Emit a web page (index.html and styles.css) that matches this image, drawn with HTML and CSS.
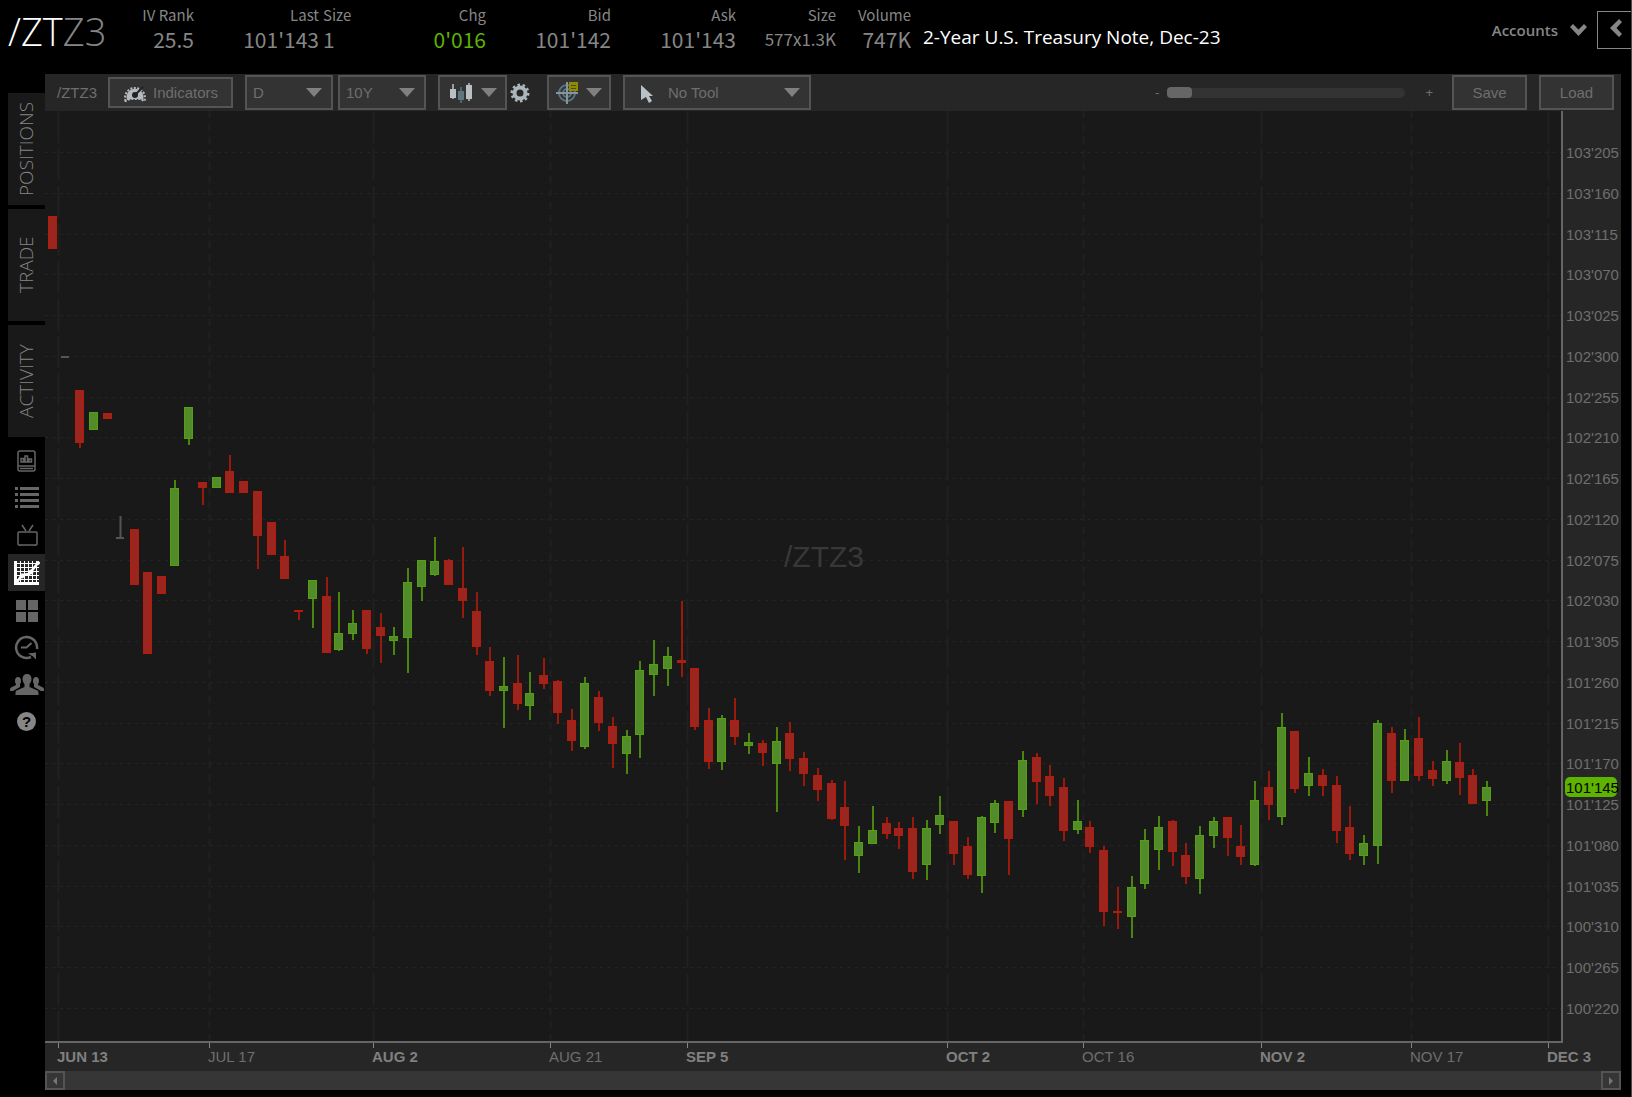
FILE: index.html
```html
<!DOCTYPE html>
<html lang="en">
<head>
    <meta charset="UTF-8">
    <meta name="viewport" content="width=device-width, initial-scale=1.0">
    <title>/ZTZ3</title>
    <link rel="stylesheet" href="styles.css">
</head>
<body>
    <header class="quote-bar">
        <h1 class="symbol">/ZT<span>Z3</span></h1>
        <div class="quote iv"><span class="label">IV Rank</span><span class="value">25.5</span></div>
        <div class="quote last"><span class="label">Last</span><span class="value">101'143</span></div>
        <div class="quote last-size"><span class="label">Size</span><span class="value">1</span></div>
        <div class="quote chg"><span class="label">Chg</span><span class="value up">0'016</span></div>
        <div class="quote bid"><span class="label">Bid</span><span class="value">101'142</span></div>
        <div class="quote ask"><span class="label">Ask</span><span class="value">101'143</span></div>
        <div class="quote size"><span class="label">Size</span><span class="value small">577x1.3K</span></div>
        <div class="quote volume"><span class="label">Volume</span><span class="value">747K</span></div>
        <p class="description">2-Year U.S. Treasury Note, Dec-23</p>
        <button class="accounts">Accounts
            <svg width="17" height="12" viewBox="0 0 17 12"><path d="M0 3 L3 0 L8.500 5.500 L14 0 L17 3 L8.500 12 Z"/></svg>
        </button>
        <button class="collapse" aria-label="Collapse">
            <svg width="12" height="18" viewBox="0 0 12 18"><path d="M9 0 L12 3 L6.500 9 L12 15 L9 18 L0 9 Z"/></svg>
        </button>
    </header>

    <main>
        <nav class="sidebar">
            <a class="tab" href="#positions">POSITIONS</a>
            <a class="tab" href="#trade">TRADE</a>
            <a class="tab" href="#activity">ACTIVITY</a>
            <div class="tools">
                <a href="#report" aria-label="Report">
                    <svg width="20" height="22" viewBox="0 0 20 22" fill="none" stroke="#666" stroke-width="1.500">
                        <rect x="1" y="1" width="17" height="20" rx="2"/>
                        <path d="M1 16H18M3 18.500H16M4 12V8.500H6.500V12ZM8 12V6H10.500V12ZM12 12V9H14.500V12Z"/>
                    </svg>
                </a>
                <a href="#watchlist" aria-label="Watchlist">
                    <svg width="24" height="22" viewBox="0 0 24 22" fill="#666">
                        <path d="M0 0h3v3h-3zM5 0h19v3H5zM0 6h3v3h-3zM5 6h19v3H5zM0 12h3v3h-3zM5 12h19v3H5zM0 18h3v3h-3zM5 18h19v3H5z"/>
                    </svg>
                </a>
                <a class="tv" href="#tv" aria-label="Video">
                    <svg width="22" height="22" viewBox="0 0 22 22" fill="none" stroke="#666" stroke-width="1.500">
                        <rect x="2" y="8" width="19" height="13" rx="1"/>
                        <path d="M10 7L6 1M13 7L17 1M4 21v1M19 21v1"/>
                    </svg>
                </a>
                <a class="active" href="#chart" aria-label="Chart">
                    <svg width="26" height="24" viewBox="0 0 26 24" fill="none" stroke="#fff">
                        <path d="M1.500 0V22.500H25" stroke-width="3"/>
                        <path d="M6.500 0V22M10.500 0V22M14.500 0V22M18.500 0V22M22.500 0V22M0 2.500H25M0 6.500H25M0 10.500H25M0 14.500H25M0 18.500H25"/>
                        <path d="M3 21L8 14L15 13L24 2" stroke-width="2.500"/>
                        <circle cx="8" cy="15" r="2" fill="#fff"/><circle cx="17" cy="11" r="2" fill="#fff"/><circle cx="24" cy="2" r="1.500" fill="#fff"/>
                    </svg>
                </a>
                <a href="#grid" aria-label="Grid">
                    <svg width="22" height="22" viewBox="0 0 22 22" fill="#666"><path d="M0 0h10v10H0zM12 0h10v10H12zM0 12h10v10H0zM12 12h10v10H12z"/></svg>
                </a>
                <a href="#history" aria-label="History">
                    <svg width="25" height="25" viewBox="0 0 25 25" fill="none" stroke="#666" stroke-width="2.500">
                        <path d="M23 14A10.500 10.500 0 1 0 17 22"/>
                        <path d="M7 12.500h5.500L17.500 8" stroke-width="2"/>
                        <path d="M14 18.500l8-1v7l-3-3z" fill="#666" stroke="none"/>
                    </svg>
                </a>
                <a href="#follow" aria-label="Follow">
                    <svg width="34" height="22" viewBox="0 0 34 22" fill="#666">
                        <path d="M17 0c3 0 4.500 2 4.500 5 0 2-1 4-2 5v3l8 3.500c1 .5 1 1.500 1 4.500H5.500c0-3 0-4 1-4.500l8-3.500v-3c-1-1-2-3-2-5 0-3 1.500-5 4.500-5z"/>
                        <path d="M8 3c2 0 3 1.500 3 4 0 1.500-.5 2.500-1 3v3l-7 4H0c0-2 0-3 1-3.500L6 11v-1c-.5-.5-1-1.500-1-3 0-2.500 1-4 3-4zM26 3c-2 0-3 1.500-3 4 0 1.500.5 2.500 1 3v3l7 4h3c0-2 0-3-1-3.500L28 11v-1c.5-.5 1-1.500 1-3 0-2.500-1-4-3-4z"/>
                    </svg>
                </a>
                <a class="help" href="#help"><span>?</span></a>
            </div>
        </nav>

        <section class="workspace">
            <div class="toolbar">
                <span class="toolbar-symbol">/ZTZ3</span>
                <button class="box indicators">
                    <svg width="24" height="22" viewBox="0 0 24 22">
                        <path d="M2.500 19A10 10 0 1 1 21.500 19L17 17H7Z" fill="none" stroke="#b5b9bd" stroke-width="2" stroke-dasharray="2 1.500"/>
                        <path d="M4 18A8.500 8.500 0 1 1 20 18L16 17H8Z" fill="#b5b9bd"/>
                        <path d="M12 13L20 5" stroke="#222" stroke-width="2"/>
                        <circle cx="12" cy="13" r="3" fill="#222"/>
                    </svg>
                    Indicators
                </button>
                <div class="dropdown period">
                    <select class="box" aria-label="Interval"><option>D</option></select>
                </div>
                <div class="dropdown range">
                    <select class="box" aria-label="Range"><option>10Y</option></select>
                </div>
                <button class="box icon-menu style-menu" aria-label="Chart style">
                    <svg width="24" height="20" viewBox="0 0 24 20">
                        <path d="M4 1v15M20 0v18" stroke="#b9c0c4" stroke-width="1.500"/><path d="M12 4v16" stroke="#5e747e" stroke-width="1.500"/>
                        <rect x="1" y="6" width="6" height="9" fill="#b9c0c4"/><rect x="9" y="8" width="6" height="9" fill="#5e747e"/><rect x="17" y="2" width="6" height="14" fill="#b9c0c4"/>
                    </svg>
                    <i class="arrow"></i>
                </button>
                <button class="gear" aria-label="Settings">
                    <svg width="20" height="20" viewBox="0 0 20 20" fill="none" stroke="#acb5ba">
                        <circle cx="10" cy="10" r="5.500" stroke-width="4"/>
                        <circle cx="10" cy="10" r="8" stroke-width="3" stroke-dasharray="3 3" pathLength="60"/>
                    </svg>
                </button>
                <button class="box icon-menu cross-menu" aria-label="Crosshair">
                    <svg width="24" height="24" viewBox="0 0 24 24" fill="none" stroke="#587582" stroke-width="2">
                        <circle cx="11" cy="12" r="8"/><circle cx="11" cy="12" r="4"/>
                        <path d="M11 1V23M0 12H22" stroke="#87959b"/>
                        <rect x="13" y="1" width="9" height="9" fill="#8f8a00" stroke="none"/><path d="M15 4.500h5M15 7.500h5" stroke="#4c4b10" stroke-width="1"/>
                    </svg>
                    <i class="arrow"></i>
                </button>
                <div class="dropdown tool">
                    <select class="box" aria-label="Drawing tool"><option>No Tool</option></select>
                    <svg class="pointer" width="13" height="18" viewBox="0 0 13 18"><path d="M0 0L12 11H8L11 16L8 18L5 12L0 15Z" fill="#b9c2c7"/></svg>
                </div>
                <div class="zoom">
                    <label for="zoom">-</label>
                    <input id="zoom" type="range" min="0" max="100" value="0">
                    <span>+</span>
                </div>
                <button class="box wide">Save</button>
                <button class="box wide">Load</button>
            </div>
            <svg id="chart" class="chart" viewBox="45 111 1576 960"></svg>
            <div class="scroller">
                <button aria-label="Scroll left"><i class="left"></i></button>
                <button aria-label="Scroll right"><i class="right"></i></button>
            </div>
        </section>
    </main>
    <script src="chart.js"></script>
</body>
</html>
```
FILE: styles.css
```css
* {
    margin: 0;
    padding: 0;
    box-sizing: border-box;
}
body {
    background-color: #000;
    color: #868686;
    font-family: 'Liberation Sans', Arial, sans-serif;
    font-size: 15px;
    border-right: 1px solid #4a4a4a;
    min-height: 100vh;
}
a {
    color: inherit;
    text-decoration: none;
}
button, select {
    font: inherit;
    color: inherit;
    background: none;
    border: none;
    border-radius: 0;
    appearance: none;
}

/* quote header */
.quote-bar {
    display: flex;
    height: 74px;
    padding-left: 8px;
    font-family: 'Noto Sans CJK SC', 'Noto Sans', sans-serif;
    white-space: nowrap;
}
.symbol {
    width: 120px;
    padding-top: 11px;
    font-family: 'Open Sans', 'Noto Sans', sans-serif;
    font-size: 38px;
    font-weight: 300;
    line-height: 40px;
    color: #fff;
}
.symbol span {
    color: #868686;
}
.quote {
    display: flex;
    flex-direction: column;
    align-items: flex-end;
    padding-top: 3px;
}
.label {
    font-size: 15px;
    line-height: 24px;
}
.value {
    font-size: 21px;
    line-height: 24px;
}
.value.small {
    font-size: 17px;
}
.up {
    color: #5db300;
}
.iv {
    width: 66px;
}
.last, .bid, .ask {
    width: 125px;
}
.last-size {
    width: 31px;
    margin-left: 4px;
    align-items: flex-start;
}
.chg {
    width: 132px;
}
.size {
    width: 100px;
}
.volume {
    width: 75px;
}
.description {
    flex: 1;
    padding: 24px 0 0 12px;
    font-family: 'Open Sans', 'Noto Sans', sans-serif;
    font-size: 19px;
    line-height: 26px;
    color: #fff;
}
.accounts {
    display: flex;
    align-items: center;
    gap: 12px;
    height: 60px;
    margin-right: 10px;
    font-family: 'Open Sans', 'Noto Sans', sans-serif;
    font-size: 15px;
    font-weight: 600;
}
.accounts svg, .collapse svg {
    fill: #868686;
}
.collapse {
    width: 34px;
    height: 38px;
    margin-top: 11px;
    padding-left: 2px;
    border: 1px solid #868686;
    border-right: none;
}

/* left navigation */
main {
    display: flex;
}
.sidebar {
    width: 45px;
    padding: 19px 0 0 8px;
}
.tab {
    display: flex;
    align-items: center;
    justify-content: center;
    width: 100%;
    height: 112px;
    margin-bottom: 4px;
    background-color: #191919;
    writing-mode: vertical-rl;
    transform: rotate(180deg);
    font-family: 'Open Sans', 'Noto Sans', sans-serif;
    font-size: 19px;
    font-weight: 300;
    line-height: 37px;
}
.tools {
    padding-top: 1px;
}
.tools a {
    display: flex;
    align-items: center;
    justify-content: center;
    height: 37px;
}
.tools .active {
    margin: 1px 0;
    background-color: #262626;
}
.help span {
    width: 19px;
    height: 19px;
    border-radius: 50%;
    background-color: #868686;
    color: #000;
    font-weight: 700;
    line-height: 19px;
    text-align: center;
}

/* chart toolbar */
.workspace {
    flex: 1;
    margin-right: 10px;
    min-width: 0;
}
.toolbar {
    display: flex;
    align-items: center;
    height: 37px;
    padding: 0 7px 0 12px;
    background-color: #262626;
    color: #6e6e6e;
}
.toolbar-symbol {
    width: 51px;
}
.box {
    height: 35px;
    border: 2px solid #545454;
    background-color: #333;
}
.indicators {
    display: flex;
    align-items: center;
    justify-content: center;
    gap: 6px;
    width: 125px;
    height: 31px;
    margin-right: 12px;
}
.dropdown {
    position: relative;
    margin-right: 5px;
}
.dropdown select {
    width: 100%;
    padding-left: 6px;
}
.dropdown::after {
    content: '';
    position: absolute;
    top: 13px;
    right: 11px;
    border: 8px solid transparent;
    border-top: 9px solid #808080;
    border-bottom: none;
    pointer-events: none;
}
.period, .range {
    width: 88px;
}
.range {
    margin-right: 12px;
}
.icon-menu {
    display: flex;
    align-items: center;
    justify-content: center;
    gap: 8px;
}
.arrow {
    border: 8px solid transparent;
    border-top: 9px solid #808080;
    border-bottom: none;
}
.style-menu {
    width: 69px;
}
.gear {
    width: 40px;
    padding-right: 14px;
    line-height: 0;
}
.cross-menu {
    width: 64px;
    gap: 6px;
    margin-right: 12px;
}
.tool {
    width: 188px;
}
.tool select {
    padding-left: 43px;
}
.pointer {
    position: absolute;
    top: 10px;
    left: 18px;
    pointer-events: none;
}
.zoom {
    display: flex;
    align-items: center;
    flex: 1;
    justify-content: flex-end;
    margin-right: 19px;
    font-size: 13px;
}
.zoom input {
    appearance: none;
    width: 238px;
    height: 10px;
    margin: 0 20px 0 8px;
    border-radius: 5px;
    background-color: #333;
}
.zoom input::-webkit-slider-thumb {
    appearance: none;
    width: 25px;
    height: 11px;
    border-radius: 4px;
    background-color: #666;
}
.wide {
    width: 75px;
}
.wide + .wide {
    margin-left: 12px;
}

/* chart */
.chart {
    display: block;
    width: 100%;
    font-size: 15px;
}
.plot {
    fill: #191919;
}
.axis-bg {
    fill: #262626;
}
.axis-line {
    fill: none;
    stroke: #666;
    stroke-width: 2;
}
.grid {
    stroke: #242424;
}
.grid.row {
    stroke-dasharray: 3 4.5;
}
.grid.major {
    stroke: #212121;
    stroke-width: 2;
    stroke-dasharray: 32 5.5;
}
.grid.minor {
    stroke: #212121;
    stroke-width: 2;
    stroke-dasharray: 7 6;
}
.tick {
    stroke: #868686;
}
.price, .date {
    fill: #6e6e6e;
}
.date.major {
    fill: #808080;
    font-weight: 700;
}
.watermark {
    fill: #383838;
    font-size: 30px;
}
.candle.r {
    fill: #9b261f;
    stroke: #b81a0a;
}
.candle.g {
    fill: #528b2a;
    stroke: #55a00c;
}
.wick {
    stroke-width: 2;
    stroke-opacity: 0.8;
}
.candle.n {
    stroke: #555;
    stroke-width: 2;
}
.badge {
    fill: #5db300;
}
.badge-text {
    fill: #000;
}

.scroller {
    display: flex;
    justify-content: space-between;
    height: 19px;
    background-color: #363636;
}
.scroller button {
    display: flex;
    align-items: center;
    justify-content: center;
    width: 20px;
    border: 2px solid #545454;
}
.scroller i {
    border: 4px solid transparent;
}
.scroller .left {
    border-left: none;
    border-right-color: #777;
}
.scroller .right {
    border-right: none;
    border-left-color: #777;
}
```
FILE: chart.js
```js
const prices = ["103'205", "103'160", "103'115", "103'070", "103'025", "102'300", "102'255", "102'210",
    "102'165", "102'120", "102'075", "102'030", "101'305", "101'260", "101'215", "101'170", "101'125",
    "101'080", "101'035", "100'310", "100'265", "100'220"];

const dates = [
    [58, 'JUN 13', true], [209, 'JUL 17', false], [373, 'AUG 2', true], [550, 'AUG 21', false],
    [687, 'SEP 5', true], [947, 'OCT 2', true], [1083, 'OCT 16', false], [1261, 'NOV 2', true],
    [1411, 'NOV 17', false], [1548, 'DEC 3', true]
];

// x, high, body top, body bottom, low, colour
const candles = [
    [52, 216, 216, 249, 249, 'r'], [65, 357, 357, 357, 357, 'n'], [79, 390, 390, 443, 448, 'r'],
    [93, 412, 412, 430, 430, 'g'], [107, 413, 413, 419, 419, 'r'], [120, 516, 538, 538, 538, 'n'],
    [134, 529, 529, 585, 585, 'r'], [147, 572, 572, 654, 654, 'r'], [161, 576, 576, 594, 594, 'r'],
    [174, 480, 488, 566, 566, 'g'], [188, 407, 407, 439, 445, 'g'], [202, 482, 482, 488, 505, 'r'],
    [216, 477, 477, 488, 488, 'g'], [229, 455, 471, 493, 493, 'r'], [243, 481, 481, 493, 493, 'r'],
    [257, 491, 491, 536, 569, 'r'], [271, 522, 522, 555, 555, 'r'], [284, 540, 556, 579, 579, 'r'],
    [298, 610, 610, 612, 620, 'r'], [312, 580, 580, 599, 628, 'g'], [326, 577, 596, 653, 653, 'r'],
    [338, 592, 633, 650, 651, 'g'], [352, 610, 623, 634, 640, 'g'], [366, 610, 610, 649, 654, 'r'],
    [380, 613, 627, 636, 663, 'r'], [393, 627, 636, 641, 655, 'g'], [407, 568, 582, 638, 673, 'g'],
    [421, 560, 560, 587, 601, 'g'], [434, 537, 561, 575, 576, 'g'], [448, 559, 560, 585, 585, 'r'],
    [462, 547, 588, 601, 618, 'r'], [476, 592, 611, 647, 655, 'r'], [489, 647, 661, 691, 696, 'r'],
    [503, 657, 686, 691, 728, 'g'], [517, 655, 683, 704, 710, 'r'], [529, 672, 693, 706, 720, 'g'],
    [543, 658, 675, 684, 689, 'r'], [557, 680, 681, 713, 724, 'r'], [571, 709, 720, 741, 751, 'r'],
    [584, 677, 683, 747, 749, 'g'], [598, 691, 697, 723, 731, 'r'], [612, 717, 726, 744, 768, 'r'],
    [626, 730, 736, 754, 774, 'g'], [639, 661, 670, 735, 758, 'g'], [653, 640, 664, 675, 696, 'g'],
    [667, 647, 656, 669, 686, 'g'], [681, 601, 660, 663, 677, 'r'], [694, 668, 668, 727, 730, 'r'],
    [708, 708, 720, 762, 769, 'r'], [721, 715, 718, 762, 770, 'g'], [734, 698, 720, 737, 745, 'r'],
    [748, 733, 742, 746, 754, 'g'], [762, 740, 743, 753, 766, 'r'], [776, 727, 741, 764, 812, 'g'],
    [789, 722, 733, 759, 771, 'r'], [803, 752, 758, 774, 786, 'r'], [817, 768, 775, 790, 801, 'r'],
    [831, 780, 783, 819, 820, 'r'], [844, 781, 807, 826, 860, 'r'], [858, 826, 842, 856, 873, 'g'],
    [872, 806, 830, 844, 844, 'g'], [886, 817, 823, 834, 839, 'r'], [898, 822, 828, 836, 849, 'r'],
    [912, 817, 828, 872, 879, 'r'], [926, 820, 828, 865, 880, 'g'], [939, 796, 815, 825, 834, 'g'],
    [953, 821, 821, 854, 865, 'r'], [967, 837, 846, 875, 879, 'r'], [981, 816, 817, 876, 893, 'g'],
    [994, 800, 803, 823, 833, 'g'], [1008, 801, 801, 839, 875, 'r'], [1022, 751, 760, 810, 817, 'g'],
    [1036, 753, 757, 782, 804, 'r'], [1049, 765, 776, 796, 806, 'r'], [1063, 778, 787, 831, 841, 'r'],
    [1077, 800, 821, 830, 834, 'g'], [1089, 821, 827, 847, 853, 'r'], [1103, 846, 850, 912, 926, 'r'],
    [1117, 887, 911, 913, 929, 'r'], [1131, 876, 887, 917, 938, 'g'], [1144, 829, 840, 884, 889, 'g'],
    [1158, 816, 827, 850, 870, 'g'], [1172, 820, 821, 852, 866, 'r'], [1185, 843, 855, 877, 884, 'r'],
    [1199, 826, 835, 879, 894, 'g'], [1213, 817, 821, 836, 848, 'g'], [1227, 817, 817, 838, 856, 'r'],
    [1240, 825, 846, 857, 865, 'r'], [1254, 781, 800, 865, 866, 'g'], [1268, 771, 787, 805, 820, 'r'],
    [1281, 713, 727, 817, 825, 'g'], [1294, 731, 731, 789, 793, 'r'], [1308, 757, 773, 786, 796, 'g'],
    [1322, 769, 775, 786, 796, 'r'], [1336, 776, 785, 831, 843, 'r'], [1349, 806, 827, 854, 860, 'r'],
    [1363, 835, 843, 856, 865, 'g'], [1377, 720, 723, 846, 864, 'g'], [1391, 727, 733, 781, 793, 'r'],
    [1404, 729, 740, 781, 781, 'g'], [1418, 717, 738, 776, 781, 'r'], [1432, 761, 770, 779, 786, 'r'],
    [1446, 750, 761, 781, 784, 'g'], [1459, 743, 762, 778, 795, 'r'], [1472, 769, 775, 804, 804, 'r'],
    [1486, 781, 787, 801, 816, 'g']
];

const right = 1562;
const bottom = 1042;
const rowStep = 40.75;
let out = `<rect class="axis-bg" x="45" y="111" width="1576" height="960"/>
    <rect class="plot" x="45" y="111" width="${right - 45}" height="${bottom - 111}"/>`;

prices.forEach((price, i) => {
    const y = Math.round(152 + i * rowStep);
    out += `<line class="grid row" x1="45" y1="${y + 0.5}" x2="${right}" y2="${y + 0.5}"/>
        <text class="price" x="1566" y="${y + 6}">${price}</text>`;
});

dates.forEach(([x, label, major]) => {
    const kind = major ? 'major' : 'minor';
    out += `<line class="grid ${kind}" x1="${x + 0.5}" y1="111" x2="${x + 0.5}" y2="${bottom}"/>
        <line class="tick" x1="${x + 0.5}" y1="${bottom}" x2="${x + 0.5}" y2="${bottom + 6}"/>
        <text class="date ${kind}" x="${x - 1}" y="1062">${label}</text>`;
});

out += `<text class="watermark" x="784" y="567">/ZTZ3</text>
    <path class="axis-line" d="M45 ${bottom}H${right}V111"/>`;

candles.forEach(([x, high, top, low, end, color]) => {
    const cx = x + 0.5;
    if (color === 'n') {
        out += `<path class="candle n" d="M${x - 4} ${top}H${x + 4}M${cx} ${high}V${top}"/>`;
        return;
    }
    out += `<path class="candle wick ${color}" d="M${x + 1} ${high}V${end}"/>
        <rect class="candle ${color}" x="${x - 3.5}" y="${top + 0.5}" width="8" height="${Math.max(low - top - 1, 1)}"/>`;
});

out += `<rect class="badge" x="1565" y="777" width="52" height="20" rx="5"/>
    <text class="badge-text" x="1566" y="793">101'145</text>`;

document.getElementById('chart').innerHTML = out;
```
